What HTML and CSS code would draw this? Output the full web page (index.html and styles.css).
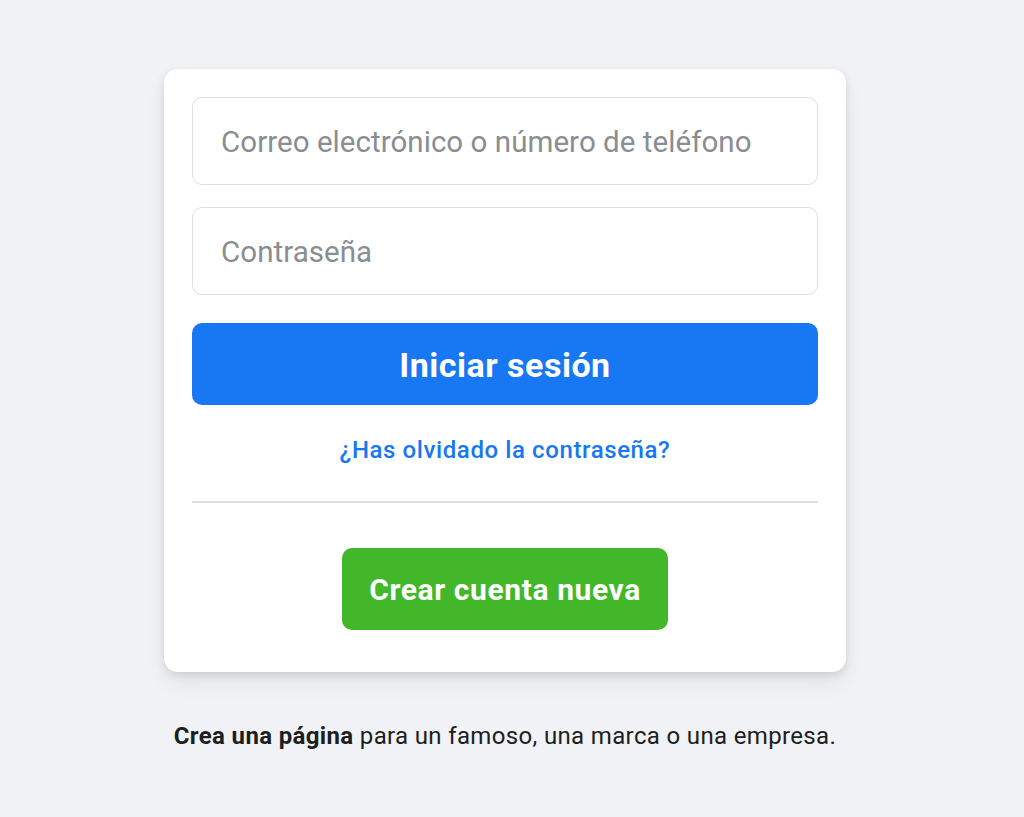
FILE: index.html
```html
<!DOCTYPE html>
<html lang="es">
<head>
<meta charset="utf-8">
<title>Iniciar sesión</title>
<link rel="stylesheet" href="styles.css">
</head>
<body>
<main class="wrap">
  <form class="card">
    <input class="field" type="text" placeholder="Correo electrónico o número de teléfono">
    <input class="field" type="password" placeholder="Contraseña">
    <button class="login" type="button">Iniciar sesión</button>
    <a class="forgot" href="#">¿Has olvidado la contraseña?</a>
    <div class="divider"></div>
    <div class="create-row">
      <button class="create" type="button">Crear cuenta nueva</button>
    </div>
  </form>
  <p class="footer"><b>Crea una página</b> para un famoso, una marca o una empresa.</p>
</main>
</body>
</html>
```
FILE: styles.css
```css
* { box-sizing: border-box; }
html, body { margin: 0; padding: 0; }
body {
  background: #f0f2f5;
  font-family: Roboto, "Liberation Sans", Arial, sans-serif;
  height: 817px;
  overflow: hidden;
}
.wrap {
  width: 682px;
  margin: 69px 0 0 164px;
}
.card {
  background: #fff;
  border-radius: 14px;
  box-shadow: 0 3px 8px rgba(0,0,0,.1), 0 12px 20px rgba(0,0,0,.06);
  padding: 28px 28px 42px;
  display: flex;
  flex-direction: column;
}
.field {
  height: 88px;
  border: 1.5px solid #dddfe2;
  border-radius: 10px;
  padding: 2px 28px 0;
  font-family: inherit;
  font-size: 29.5px;
  letter-spacing: 0.05px;
  color: #1c1e21;
  outline: none;
}
.field + .field { margin-top: 22px; }
.field::placeholder { color: #8a8d91; }
.login {
  margin-top: 28px;
  height: 82px;
  padding-top: 2px;
  border: 0;
  border-radius: 10px;
  background: #1877f2;
  color: #fff;
  font-family: inherit;
  font-size: 34px;
  font-weight: 700;
  letter-spacing: 0.5px;
}
.forgot {
  margin-top: 30px;
  text-align: center;
  color: #1877f2;
  font-size: 24px;
  font-weight: 500;
  letter-spacing: 0.6px;
  text-decoration: none;
  line-height: 30px;
}
.divider {
  margin-top: 36px;
  height: 2px;
  background: #dadde1;
}
.create-row {
  margin-top: 45px;
  display: flex;
  justify-content: center;
}
.create {
  width: 326px;
  height: 82px;
  border: 0;
  border-radius: 10px;
  background: #42b72a;
  color: #fff;
  font-family: inherit;
  font-size: 30px;
  font-weight: 700;
  letter-spacing: 0.6px;
}
.footer {
  margin: 49px 0 0;
  text-align: center;
  font-size: 24px;
  letter-spacing: 0.35px;
  color: #1c1e21;
  line-height: 30px;
  white-space: nowrap;
}
.footer b { font-weight: 700; }
```
